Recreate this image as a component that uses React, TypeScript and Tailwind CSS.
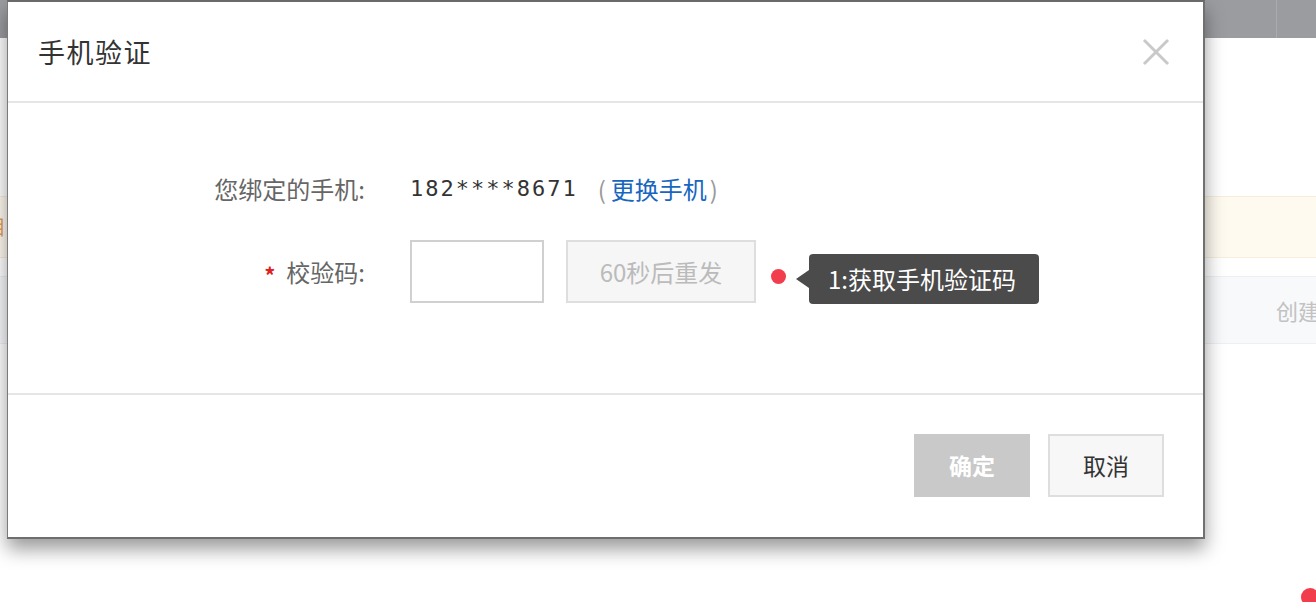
import React from "react";

const cjk = "font-['Noto_Sans_CJK_SC','Noto_Sans',sans-serif]";

export default function App() {
  return (
    <div className={`relative w-[1316px] h-[602px] overflow-hidden bg-white ${cjk}`}>
      {/* background page */}
      <div className="flex flex-col">
        <div className="h-[38px] bg-[#9a9c9f] flex justify-end">
          <div className="w-[40px] border-l border-[#a9abae]" />
        </div>
        <div className="h-[158px]" />
        <div className="h-[62px] bg-[#fffaf0] border-y border-[#f6eedb] flex items-center">
          <span className="text-[20px] text-[#e0a060] -ml-[14px]">目</span>
        </div>
        <div className="h-[18px]" />
        <div className="h-[68px] bg-[#f8f9fb] border-y border-[#eceff3] flex items-center justify-end">
          <span className="text-[22px] text-[#c2c2c2] -mr-[4px]">创建</span>
        </div>
      </div>
      <div className="absolute left-[1301px] top-[588px] w-[18px] h-[18px] rounded-full bg-[#f23d4d]" />

      {/* modal */}
      <div className="absolute left-[7px] top-0 w-[1198px] h-[539px] bg-white border-l border-r-2 border-t-2 border-b-2 border-l-[#7a7a7a] border-r-[#707070] border-t-[#6a6a6a] border-b-[#6e6e6e] shadow-[0_10px_18px_rgba(0,0,0,0.4)] flex flex-col">
        <div className="h-[99px] flex items-center justify-between pl-[30px] pr-[33px] shrink-0">
          <span className="text-[27px] text-[#333] tracking-[1.5px] leading-none">手机验证</span>
          <svg width="28" height="28" viewBox="0 0 28 28" className="block">
            <path d="M2 2 L26 26 M26 2 L2 26" stroke="#c9c9c9" strokeWidth="3" strokeLinecap="butt" />
          </svg>
        </div>
        <div className="h-[2px] bg-[#e6e6e6] shrink-0" />
        <div className="h-[290px] shrink-0 pt-[66px] flex flex-col gap-[31px]">
          <div className="flex items-center h-[40px]">
            <div className="w-[357px] text-right text-[24px] text-[#666] leading-none">您绑定的手机:</div>
            <div className="ml-[45px] flex items-center">
              <span className="font-['DejaVu_Sans_Mono',monospace] text-[22px] tracking-[2px] text-[#333] leading-none">182****8671</span>
              <span className="ml-[20px] mr-[5px] text-[24px] text-[#999] leading-none">(</span>
              <span className="text-[24px] text-[#1766bf] leading-none">更换手机</span>
              <span className="ml-[3px] text-[24px] text-[#999] leading-none">)</span>
            </div>
          </div>
          <div className="flex items-center h-[63px]">
            <div className="w-[357px] flex justify-end items-center text-[24px] text-[#666] leading-none">
              <span className="text-[#e02020] text-[22px] font-bold mr-[11px] mt-[5px]">*</span>
              <span>校验码:</span>
            </div>
            <div className="ml-[45px] w-[134px] h-[63px] border-2 border-[#d0d0d0] bg-white" />
            <div className="ml-[22px] w-[190px] h-[63px] border-2 border-[#dedede] bg-[#f6f6f6] flex items-center justify-center text-[24px] text-[#bbb]">
              60秒后重发
            </div>
            <div className="ml-[15px] w-[15px] h-[15px] rounded-full bg-[#f23d4d] mt-[10px]" />
            <div className="ml-[10px] mt-[14px] flex items-center">
              <svg width="13" height="18" viewBox="0 0 13 18" className="block">
                <path d="M0 9 L13 0 L13 18 Z" fill="#4b4b4b" />
              </svg>
              <div className="w-[230px] h-[50px] rounded-[4px] bg-[#4b4b4b] flex items-center pl-[19px] text-[24px] text-white leading-none">
                1:获取手机验证码
              </div>
            </div>
          </div>
        </div>
        <div className="h-[2px] bg-[#e6e6e6] shrink-0" />
        <div className="flex-1 flex justify-end items-start pt-[39px] pr-[39px] gap-[18px]">
          <div className="w-[116px] h-[63px] bg-[#c9c9c9] flex items-center justify-center text-[23px] font-bold text-white">
            确定
          </div>
          <div className="w-[116px] h-[63px] bg-[#f7f7f7] border-2 border-[#dedede] flex items-center justify-center text-[23px] text-[#333]">
            取消
          </div>
        </div>
      </div>
    </div>
  );
}
